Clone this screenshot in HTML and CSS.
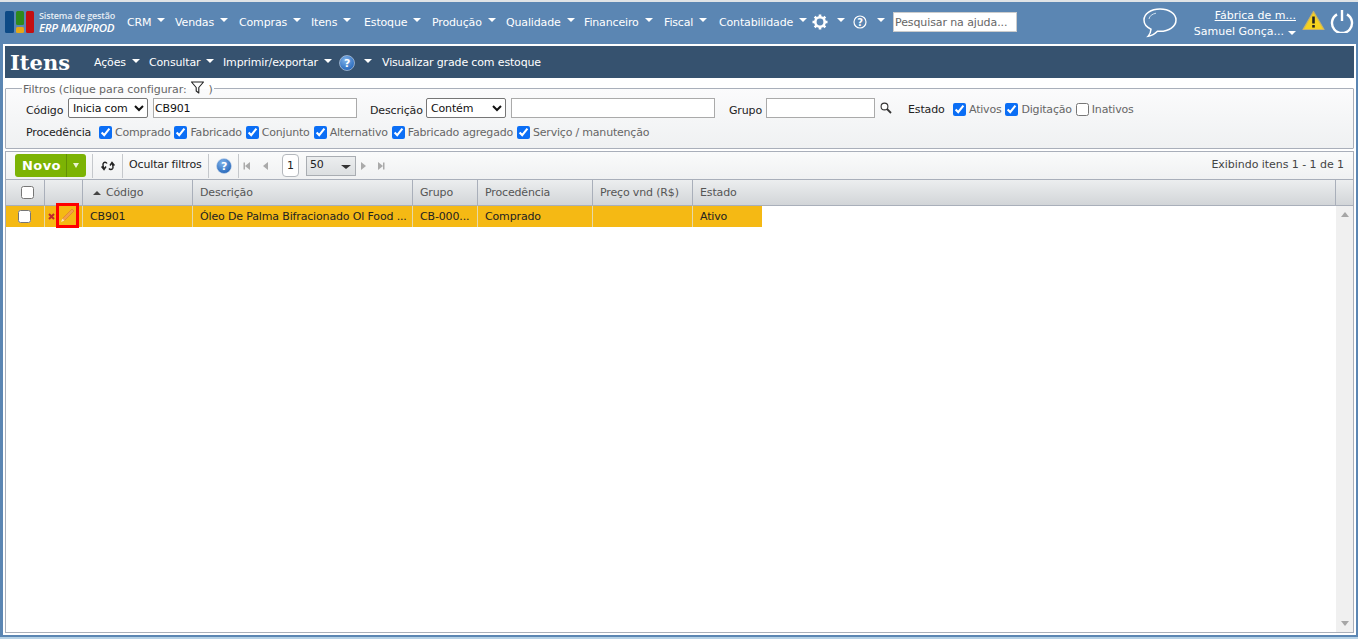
FILE: index.html
```html
<!DOCTYPE html>
<html lang="pt-BR">
<head>
<meta charset="utf-8">
<title>Itens</title>
<link rel="stylesheet" href="styles.css">
</head>
<body>
<header class="topbar">
  <div class="logo">
    <svg width="30" height="24" viewBox="0 0 30 24"><rect x="0" y="0" width="9" height="22" rx="1.5" fill="#0d4a86"/><rect x="11" y="0" width="8" height="14" rx="1.500" fill="#2f8a1c"/><rect x="11" y="16" width="8" height="6" rx="1.500" fill="#e6a817"/><rect x="21" y="0" width="8" height="22" rx="1.500" fill="#c40f12"/></svg>
    <div class="logo-text"><span class="logo-small">Sistema de gestão</span><span class="logo-big">ERP MAXIPROD</span></div>
  </div>
  <nav class="mainnav">
    <span class="mi" style="width:48px">CRM<i class="caret"></i></span>
    <span class="mi" style="width:64px">Vendas<i class="caret"></i></span>
    <span class="mi" style="width:72px">Compras<i class="caret"></i></span>
    <span class="mi" style="width:53px">Itens<i class="caret"></i></span>
    <span class="mi" style="width:68px">Estoque<i class="caret"></i></span>
    <span class="mi" style="width:74px">Produção<i class="caret"></i></span>
    <span class="mi" style="width:78px">Qualidade<i class="caret"></i></span>
    <span class="mi" style="width:80px">Financeiro<i class="caret"></i></span>
    <span class="mi" style="width:55px">Fiscal<i class="caret"></i></span>
    <span class="mi" style="width:93px">Contabilidade<i class="caret"></i></span>
    <span class="mi icon-mi">
      <svg width="16" height="16" viewBox="0 0 16 16"><circle cx="8" cy="8" r="4.700" fill="none" stroke="#fff" stroke-width="2.600"/><g stroke="#fff" stroke-width="2.600"><path d="M8 0.500v3M8 12.500v3M0.500 8h3M12.500 8h3M2.700 2.700l2.100 2.100M11.200 11.200l2.100 2.100M13.300 2.700l-2.100 2.100M4.800 11.200l-2.100 2.100"/></g></svg>
      <i class="caret caret-gap"></i>
    </span>
    <span class="mi icon-mi help-mi">
      <svg width="14" height="14" viewBox="0 0 14 14"><circle cx="7" cy="7" r="6" fill="none" stroke="#fff" stroke-width="1.200"/><text x="7" y="10.500" text-anchor="middle" class="q">?</text></svg>
      <i class="caret caret-gap2"></i>
    </span>
  </nav>
  <input class="helpsearch" type="text" placeholder="Pesquisar na ajuda...">
  <svg class="chat" width="36" height="32" viewBox="0 0 36 32"><path d="M18 2C9 2 2 6.800 2 13c0 4 2.800 7.300 7 9.200-.2 2.500-.9 5-2.800 7 3.500-.5 6.800-2.500 9.200-5 .9.100 1.700.1 2.600.1 9 0 16-4.800 16-11.300S27 2 18 2z" fill="none" stroke="#fff" stroke-width="1.500"/><path d="M7 12c.5-3 3-5 7-5.800" fill="none" stroke="#cfe0ee" stroke-width="1"/></svg>
  <div class="user">
    <a class="company">Fábrica de m...</a>
    <span class="uname">Samuel Gonça...<i class="caret caret-user"></i></span>
  </div>
  <svg class="warn" width="23" height="21" viewBox="0 0 23 21"><path d="M11.500 1.500 L22 19.500 H1 Z" fill="#f6d21f" stroke="#c9b267" stroke-width="1.200" stroke-linejoin="round"/><path d="M11.500 6.500v7" stroke="#222" stroke-width="2.600"/><rect x="10.200" y="15" width="2.600" height="2.600" fill="#222"/></svg>
  <svg class="power" width="24" height="24" viewBox="0 0 24 24"><path d="M7 5.400a10 10 0 1 0 10 0" fill="none" stroke="#fff" stroke-width="2.400"/><path d="M12 1v11" stroke="#fff" stroke-width="2.400"/></svg>
</header>

<main class="panel">
  <div class="titlebar">
    <h1>Itens</h1>
    <span class="tb-item" style="width:55px">Ações<i class="caret"></i></span>
    <span class="tb-item" style="width:74px">Consultar<i class="caret"></i></span>
    <span class="tb-item" style="width:116px">Imprimir/exportar<i class="caret"></i></span>
    <svg class="help-blue" width="16" height="16" viewBox="0 0 16 16"><use href="#helpball"/></svg>
    <i class="caret caret-title"></i>
    <span class="tb-link">Visualizar grade com estoque</span>
  </div>

  <fieldset class="filters">
    <legend>Filtros (clique para configurar:
      <svg width="15" height="13" viewBox="0 0 14 13"><path d="M1 1h12L8.300 6.500V12L5.700 10V6.500z" fill="none" stroke="#222" stroke-width="1.100" stroke-linejoin="round"/></svg> )</legend>
    <div class="frow frow1">
      <label class="lbl lbl-cod">Código</label>
      <select class="sel sel-a"><option>Inicia com</option></select>
      <input class="txt txt-cod" type="text" value="CB901">
      <label class="lbl lbl-desc">Descrição</label>
      <select class="sel sel-b"><option>Contém</option></select>
      <input class="txt txt-desc" type="text">
      <label class="lbl lbl-grp">Grupo</label>
      <input class="txt txt-grp" type="text">
      <svg class="lens" width="12" height="12" viewBox="0 0 12 12"><circle cx="4.500" cy="4.500" r="3.400" fill="#fff" stroke="#333" stroke-width="1.100"/><path d="M7 7l4 4" stroke="#333" stroke-width="1.800"/></svg>
      <label class="lbl lbl-est">Estado</label>
      <span class="chk-group">
        <label class="ck"><input type="checkbox" checked>Ativos</label>
        <label class="ck"><input type="checkbox" checked>Digitação</label>
        <label class="ck"><input type="checkbox">Inativos</label>
      </span>
    </div>
    <div class="frow frow2">
      <label class="lbl lbl-proc">Procedência</label>
      <span class="chk-group">
        <label class="ck"><input type="checkbox" checked>Comprado</label>
        <label class="ck"><input type="checkbox" checked>Fabricado</label>
        <label class="ck"><input type="checkbox" checked>Conjunto</label>
        <label class="ck"><input type="checkbox" checked>Alternativo</label>
        <label class="ck"><input type="checkbox" checked>Fabricado agregado</label>
        <label class="ck"><input type="checkbox" checked>Serviço / manutenção</label>
      </span>
    </div>
  </fieldset>

  <section class="grid">
    <div class="toolbar">
      <div class="novo"><span class="novo-main">Novo</span><span class="novo-arrow"></span></div>
      <span class="sep"></span>
      <svg class="refresh" width="14" height="12" viewBox="0 0 14 12"><path d="M6 3.500C5 1.800 2.800 2 2.200 3.500 1.800 4.800 2 6.500 3 8.500M.5 6.500 3 9.500 5 6.500M8 8.500c1 1.500 3.200 1.300 3.800-.2.400-1.300.200-3-.8-5M13.500 5.500 11 2.500 9 5.500" fill="none" stroke="#222" stroke-width="1.400"/></svg>
      <span class="sep"></span>
      <span class="hide-filters">Ocultar filtros</span>
      <span class="sep"></span>
      <svg class="help-blue tb-help" width="16" height="16" viewBox="0 0 16 16"><use href="#helpball"/></svg>
      <span class="sep"></span>
      <span class="pg pg-first"></span><span class="pg pg-prev"></span>
      <span class="pagebox">1</span>
      <span class="pagesize">50<i class="ps-caret"></i></span>
      <span class="pg pg-next"></span><span class="pg pg-last"></span>
      <span class="showing">Exibindo itens 1 - 1 de 1</span>
    </div>

    <div class="thead">
      <div class="c c-check"><input type="checkbox"></div>
      <div class="c c-act"></div>
      <div class="c c-cod"><i class="sort"></i>Código</div>
      <div class="c c-des">Descrição</div>
      <div class="c c-grp">Grupo</div>
      <div class="c c-pro">Procedência</div>
      <div class="c c-pre">Preço vnd (R$)</div>
      <div class="c c-est-h">Estado</div>
      <div class="c c-sb"></div>
    </div>

    <div class="tbody">
      <div class="rows">
        <div class="trow">
          <div class="c c-check"><input type="checkbox"></div>
          <div class="c c-act">
            <svg class="x" width="7" height="7" viewBox="0 0 7 7"><path d="M1 1l5 5M6 1L1 6" stroke="#c0272d" stroke-width="2"/></svg>
            <span class="pencil-box"><svg width="15" height="15" viewBox="0 0 15 15"><path d="M12 1 L14 3 L4.500 12.500 L2.500 10.500 Z" fill="#f2a04a" stroke="#dc7f2c" stroke-width=".7"/><path d="M2.500 10.500 L4.500 12.500 L1 14 Z" fill="#fbe6bf"/></svg></span>
          </div>
          <div class="c c-cod">CB901</div>
          <div class="c c-des">Óleo De Palma Bifracionado Ol Food ...</div>
          <div class="c c-grp">CB-000...</div>
          <div class="c c-pro">Comprado</div>
          <div class="c c-pre"></div>
          <div class="c c-est">Ativo</div>
        </div>
      </div>
      <div class="scroll"><i class="sb-up"></i><i class="sb-down"></i></div>
    </div>
  </section>
</main>

<svg class="defs" width="0" height="0"><defs>
  <radialGradient id="ballg" cx=".4" cy=".3" r=".8"><stop offset="0" stop-color="#7fb2ea"/><stop offset="1" stop-color="#1c5fb5"/></radialGradient>
  <g id="helpball"><circle cx="8" cy="8" r="7.500" fill="url(#ballg)" stroke="#cfdcec" stroke-width=".6"/><text x="8" y="12" text-anchor="middle" class="qb">?</text></g>
</defs></svg>
</body>
</html>
```

FILE: styles.css
```css
* { box-sizing: border-box; }
html, body { margin: 0; padding: 0; }
body {
  width: 1358px;
  height: 639px;
  overflow: hidden;
  background: #5b86b3;
  border-top: 2px solid #dfe3e6;
  border-bottom: 2px solid #b7d2e6;
  font-family: "DejaVu Sans", sans-serif;
  font-size: 11px;
  letter-spacing: -0.15px;
  color: #222;
}
.defs { display: block; height: 0; }
.q { font: bold 10px "DejaVu Sans", sans-serif; fill: #fff; }
.qb { font: bold 11px "DejaVu Sans", sans-serif; fill: #fff; }

.topbar {
  height: 42px;
  display: flex;
  align-items: center;
  padding-left: 5px;
  color: #fff;
}
.logo { display: flex; align-items: center; width: 122px; }
.logo svg { margin-right: 4px; }
.logo-text { display: flex; flex-direction: column; line-height: 12px; margin-bottom: 2px; }
.logo-small { font-family: "Open Sans", sans-serif; font-size: 9px; letter-spacing: -0.15px; color: #e6edf4; font-weight: 600; }
.logo-big { font-size: 11.500px; font-style: italic; letter-spacing: -0.3px; font-family: "Open Sans", sans-serif; font-weight: 600; }
.mainnav { display: flex; align-items: center; height: 20px; margin-bottom: 2px; }
.mi { display: inline-flex; align-items: center; white-space: nowrap; }
.caret {
  display: inline-block;
  width: 0; height: 0;
  margin: -4px 0 0 6px;
  border-left: 4px solid transparent;
  border-right: 4px solid transparent;
  border-top: 4px solid #fff;
}
.icon-mi { width: 41px; }
.help-mi { width: 40px; }
.caret-gap { margin-left: 9px; }
.caret-gap2 { margin-left: 10px; }
.helpsearch {
  width: 124px;
  height: 20px;
  margin-bottom: 2px;
  padding: 0 1px;
  border: 1px solid #ccc;
  background: #fff;
  font: inherit;
  letter-spacing: -0.1px;
}
.helpsearch::placeholder { color: #666; opacity: 1; }
.chat { margin-left: 125px; }
.user { width: 103px; margin-left: 15px; margin-top: 2px; display: flex; flex-direction: column; align-items: flex-end; line-height: 16px; letter-spacing: 0; }
.company { text-decoration: underline; white-space: nowrap; }
.uname { display: inline-flex; align-items: center; white-space: nowrap; }
.caret-user { margin: 1px 0 0 4px; }
.warn { margin-left: 6px; margin-bottom: 6px; }
.power { margin-left: 5px; margin-bottom: 4px; }

.panel {
  margin: 0 2px 0 3px;
  height: 591px;
  background: #fff;
  border: 2px solid #fff;
  display: flex;
  flex-direction: column;
}
.titlebar {
  height: 32px;
  flex: none;
  background: #36526f;
  color: #fff;
  display: flex;
  align-items: center;
  padding: 1px 0 0 5px;
}
.titlebar h1 {
  margin: 0;
  width: 84px;
  font: bold 21px "DejaVu Serif", serif;
  letter-spacing: 0;
}
.tb-item { display: inline-flex; align-items: center; white-space: nowrap; }
.help-blue { flex: none; }
.caret-title { margin-left: 9px; margin-right: 10px; }
.tb-link { white-space: nowrap; }

.filters {
  flex: none;
  margin: 3px 0 0 0;
  padding: 0 0 0 20px;
  height: 68px;
  border: 1px solid #a9afba;
  border-radius: 1px;
  background: linear-gradient(#fbfbfc, #eff1f2);
  min-width: 0;
}
.filters legend {
  margin-left: -4px;
  padding: 0 1px;
  color: #666;
  line-height: 12px;
  white-space: nowrap;
  letter-spacing: -0.05px;
}
.filters legend svg { vertical-align: -1px; }
.frow { display: flex; align-items: center; }
.frow1 { height: 20px; margin-top: 2px; }
.frow2 { height: 16px; margin-top: 6px; }
.lbl { color: #222; white-space: nowrap; }
.lbl-cod { margin-top: 4px; width: 42px; }
.sel {
  height: 20px;
  background: #fff;
  border: 1px solid #767676;
  border-radius: 2px;
  font: inherit;
  letter-spacing: inherit;
  color: #111;
}
.sel-a { width: 80px; margin-right: 5px; }
.sel-b { width: 80px; margin-right: 5px; }
.txt {
  height: 20px;
  border: 1px solid #aaa;
  background: #fff;
  padding: 0 1px;
  font: inherit;
  letter-spacing: inherit;
  color: #111;
}
.txt-cod { width: 204px; margin-right: 13px; }
.lbl-desc { width: 56px; margin-top: 4px; }
.txt-desc { width: 204px; margin-right: 14px; }
.lbl-grp { width: 37px; margin-top: 4px; }
.txt-grp { width: 109px; margin-right: 5px; }
.lens { margin-right: 16px; }
.lbl-est { width: 45px; margin-top: 2px; }
.chk-group { display: inline-flex; align-items: center; gap: 4px; }
.frow1 .chk-group { margin-top: 2px; }
.ck { display: inline-flex; align-items: center; color: #666; white-space: nowrap; letter-spacing: -0.2px; }
.ck input { width: 13px; height: 13px; margin: 0 3px 0 0; accent-color: #0b6ef5; }
.lbl-proc { width: 73px; }

.grid {
  flex: 1;
  margin-top: 2px;
  border: 1px solid #a9afba;
  display: flex;
  flex-direction: column;
  min-height: 0;
}
.toolbar {
  height: 28px;
  flex: none;
  display: flex;
  align-items: center;
  padding-left: 9px;
  background: linear-gradient(#fafbfb, #f0f1f2);
  border-bottom: 1px solid #a9afba;
}
.novo {
  width: 71px;
  height: 23px;
  display: flex;
  border-radius: 3px;
  background: #7cb304;
  color: #fff;
  font-weight: bold;
  font-size: 13px;
  letter-spacing: 0.4px;
}
.novo-main { width: 52px; text-align: center; line-height: 23px; border-right: 1px solid #639103; padding-left: 2px; }
.novo-arrow {
  width: 0; height: 0;
  margin: 9px 0 0 6px;
  border-left: 3px solid transparent;
  border-right: 3px solid transparent;
  border-top: 5px solid #e9f3cf;
}
.sep { width: 1px; height: 24px; background: #c5c8cc; flex: none; margin-left: 6px; }
.refresh { margin: 0 7px 0 8px; }
.sep + .refresh + .sep { margin-left: 0; }
.hide-filters { margin: 0 0 2px 6px; white-space: nowrap; width: 79px; }
.hide-filters + .sep { margin-left: 0; }
.tb-help { margin-left: 7px; }
.tb-help + .sep { margin-left: 6px; }
.pg { display: block; width: 0; height: 0; flex: none; border-top: 4px solid transparent; border-bottom: 4px solid transparent; }
.pg-first { margin-left: 6px; border-right: 5px solid #aaa; box-shadow: -2px 0 0 -0.500px #aaa; }
.pg-prev { margin-left: 13px; border-right: 5px solid #aaa; }
.pagebox {
  width: 17px; height: 23px;
  margin-left: 14px;
  border: 1px solid #b4b8bd;
  border-radius: 4px;
  background: #fff;
  text-align: center;
  line-height: 21px;
  color: #222;
}
.pagesize {
  width: 50px; height: 20px;
  margin-left: 7px;
  border: 1px solid #a9adb2;
  background: linear-gradient(#eceeef, #dcdfe1);
  padding-left: 3px;
  line-height: 16px;
  position: relative;
}
.ps-caret {
  position: absolute;
  right: 4px; top: 8px;
  width: 0; height: 0;
  border-left: 5px solid transparent;
  border-right: 5px solid transparent;
  border-top: 4px solid #333;
}
.pg-next { margin-left: 5px; border-left: 5px solid #aaa; }
.pg-last { margin-left: 12px; border-left: 5px solid #aaa; box-shadow: 2px 0 0 -0.500px #aaa; }
.showing { margin: 0 0 2px auto; padding-right: 9px; color: #444; white-space: nowrap; letter-spacing: -0.05px; }

.thead {
  flex: none;
  height: 26px;
  display: flex;
  background: linear-gradient(#eceeef, #d2d5d8);
  border-bottom: 1px solid #a9afba;
  color: #555;
}
.c {
  flex: none;
  height: 100%;
  display: flex;
  align-items: center;
  padding-left: 7px;
  white-space: nowrap;
  border-right: 1px solid #a9afba;
}
.c-check { width: 39px; padding-left: 15px; }
.c-check input { width: 13px; height: 13px; margin: 0; }
.c-act { width: 38px; padding-left: 3px; position: relative; }
.c-cod { width: 110px; }
.c-des { width: 220px; }
.c-grp { width: 65px; }
.c-pro { width: 115px; }
.c-pre { width: 100px; }
.c-est-h { width: 643px; }
.c-est { width: 69px; border-right: 0; }
.c-sb { flex: 1; border-right: 0; }
.sort {
  width: 0; height: 0;
  margin: 0 5px 0 3px;
  border-left: 4px solid transparent;
  border-right: 4px solid transparent;
  border-bottom: 4px solid #444;
}
.tbody { flex: 1; display: flex; min-height: 0; }
.rows { flex: 1; min-width: 0; }
.trow {
  height: 21px;
  display: flex;
  width: 756px;
  background: #f5b914;
  color: #222;
}
.trow .c { border-right-color: #e6d9a8; }
.trow .c-check { padding-left: 12px; }
.x { margin-right: 3px; }
.pencil-box {
  width: 23px; height: 25px;
  border: 3px solid #ff0000;
  background: #f5b914;
  display: flex;
  align-items: center;
  justify-content: center;
  position: absolute;
  left: 11px;
  top: -3px;
  z-index: 1;
}
.scroll {
  width: 17px;
  flex: none;
  background: #f0f0f0;
  position: relative;
}
.sb-up, .sb-down {
  position: absolute;
  left: 5px;
  width: 0; height: 0;
  border-left: 4px solid transparent;
  border-right: 4px solid transparent;
}
.sb-up { top: 6px; border-bottom: 5px solid #a6a6a6; }
.sb-down { bottom: 6px; border-top: 5px solid #a6a6a6; }
```
